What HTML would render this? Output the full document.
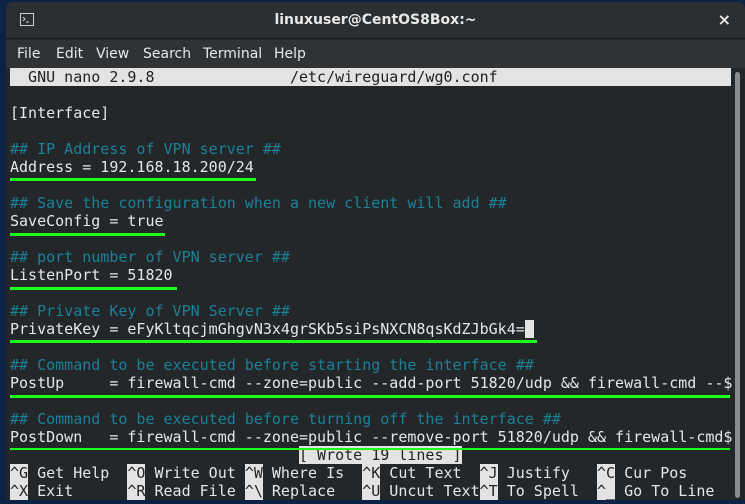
<!DOCTYPE html>
<html><head><style>
*{margin:0;padding:0;box-sizing:border-box}
body{width:745px;height:504px;background:#0d2345;overflow:hidden;position:relative;font-family:"DejaVu Sans Mono",monospace}
#win{position:absolute;left:6px;top:2px;width:739px;height:498px;background:#23272a;border-radius:7px 7px 0 0;overflow:hidden}
#title{position:absolute;left:0;top:0;width:100%;height:37px;background:#2c2f32;border-bottom:1px solid #1a1c1e;color:#e8e8e8;font-family:"DejaVu Sans",sans-serif;font-size:14px;font-weight:bold;text-align:center;line-height:36px}
#menu{position:absolute;left:0;top:38px;width:100%;height:28px;background:#2f3336;color:#e8e8e8;font-family:"DejaVu Sans",sans-serif;font-size:14px;line-height:28px}
#menu span{position:absolute}
.r{position:absolute;left:4px;height:18px;line-height:18px;font-size:15px;white-space:pre;color:#e6e6e6}
.c{color:#1b8197}
.inv{background:#e3e3e3;color:#222}
.g{position:absolute;height:3px;background:#1eff1e;left:4px}
</style></head><body>
<div id="win">
<div id="title">linuxuser@CentOS8Box:~
<svg style="position:absolute;left:14px;top:11px" width="14" height="13"><rect x="0.5" y="0.5" width="13" height="12" fill="none" stroke="#ccc"/><path d="M3 4l2 2-2 2" stroke="#ccc" fill="none"/><path d="M6 9h3" stroke="#ccc"/></svg>
<span style="position:absolute;right:14px;top:0;font-size:16px">×</span></div>
<div id="menu"><span style="left:11px">File</span><span style="left:50px">Edit</span><span style="left:90px">View</span><span style="left:137px">Search</span><span style="left:197px">Terminal</span><span style="left:268px">Help</span></div>
<div class="r inv" style="top:66px;width:721px">  GNU nano 2.9.8               /etc/wireguard/wg0.conf</div>
<div style="position:absolute;left:729px;top:70px;width:5px;height:426px;background:#8a8c8e;border-radius:3px"></div>
<div class="r" style="top:102px">[Interface]</div>
<div class="r c" style="top:138px">## IP Address of VPN server ##</div>
<div class="r" style="top:156px">Address = 192.168.18.200/24</div>
<div class="g" style="top:176px;width:246px"></div>
<div class="r c" style="top:192px">## Save the configuration when a new client will add ##</div>
<div class="r" style="top:210px">SaveConfig = true</div>
<div class="g" style="top:231px;width:155px"></div>
<div class="r c" style="top:246px">## port number of VPN server ##</div>
<div class="r" style="top:264px">ListenPort = 51820</div>
<div class="g" style="top:285px;width:167px"></div>
<div class="r c" style="top:300px">## Private Key of VPN Server ##</div>
<div class="r" style="top:318px">PrivateKey = eFyKltqcjmGhgvN3x4grSKb5siPsNXCN8qsKdZJbGk4=<span class="inv"> </span></div>
<div class="g" style="top:338px;width:527px"></div>
<div class="r c" style="top:354px">## Command to be executed before starting the interface ##</div>
<div class="r" style="top:372px">PostUp     = firewall-cmd --zone=public --add-port 51820/udp &amp;&amp; firewall-cmd --$</div>
<div class="g" style="top:393px;width:720px"></div>
<div class="r c" style="top:408px">## Command to be executed before turning off the interface ##</div>
<div class="r" style="top:426px">PostDown   = firewall-cmd --zone=public --remove-port 51820/udp &amp;&amp; firewall-cmd$</div>
<div class="r" style="top:444px">                                <span class="inv">[ Wrote 19 lines ]</span></div>
<div class="g" style="top:446px;width:720px;height:2px"></div>
<div class="r" style="top:462px"><span class="inv">^G</span> Get Help  <span class="inv">^O</span> Write Out <span class="inv">^W</span> Where Is  <span class="inv">^K</span> Cut Text  <span class="inv">^J</span> Justify   <span class="inv">^C</span> Cur Pos</div>
<div class="r" style="top:480px"><span class="inv">^X</span> Exit      <span class="inv">^R</span> Read File <span class="inv">^\</span> Replace   <span class="inv">^U</span> Uncut Text<span class="inv">^T</span> To Spell  <span class="inv">^_</span> Go To Line</div>
</div>
</body></html>
